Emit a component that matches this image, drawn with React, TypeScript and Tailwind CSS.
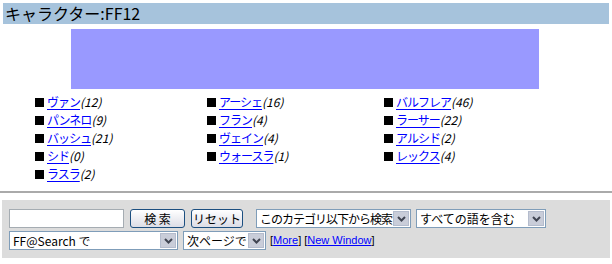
const jp = { fontFamily: '"Noto Sans CJK JP", "DejaVu Sans", sans-serif' };

const chars: [string, number][][] = [
  [["ヴァン", 12], ["アーシェ", 16], ["バルフレア", 46]],
  [["パンネロ", 9], ["フラン", 4], ["ラーサー", 22]],
  [["バッシュ", 21], ["ヴェイン", 4], ["アルシド", 2]],
  [["シド", 0], ["ウォースラ", 1], ["レックス", 4]],
  [["ラスラ", 2]],
];

function Item({ name, n }: { name: string; n: number }) {
  return (
    <div className="flex items-center h-[18px] text-[12px]" style={jp}>
      <span className="inline-block w-[9px] h-[9px] bg-black mr-[3px]" />
      <a className="text-[#0000ff] underline underline-offset-2 tracking-[-1px]">{name}</a>
      <span className="italic text-black">({n})</span>
    </div>
  );
}

function Arrow() {
  return (
    <span className="flex items-center justify-center w-[16px] h-[15px] m-[1px] bg-[#c9cdd9] border border-[#b4bccd]">
      <svg width="9" height="6" viewBox="0 0 9 6">
        <path d="M1 1 L4.5 4.5 L8 1" stroke="#404552" strokeWidth="2" fill="none" />
      </svg>
    </span>
  );
}

function Select({ w, label, tight }: { w: string; label: string; tight?: boolean }) {
  return (
    <div className={`${w} h-[19px] flex items-center justify-between bg-white border border-[#7f9db9]`}>
      <span className={`pl-[3px] text-[12px] leading-none text-black whitespace-nowrap ${tight ? "tracking-[-1px]" : ""}`} style={jp}>
        {label}
      </span>
      <Arrow />
    </div>
  );
}

function Btn({ w, label }: { w: string; label: string }) {
  return (
    <div
      className={`${w} h-[19px] flex items-center justify-center rounded-[3px] border border-[#1c4f80] bg-gradient-to-b from-white to-[#dcdde6] text-[12px] text-black`}
      style={jp}
    >
      {label}
    </div>
  );
}

export default function App() {
  return (
    <div className="w-[612px] h-[264px] bg-white overflow-hidden">
      <div className="mx-[3px] mt-[3px] h-[21px] bg-[#a6c3dc] pl-[2px] text-[16px] leading-[21px] text-black" style={jp}>
        キャラクター:FF12
      </div>
      <div className="mt-[5px] ml-[71px] w-[468px] h-[60px] bg-[#9999ff]" />
      <div className="mt-[4px] pl-[35px]">
        {chars.map((row, i) => (
          <div key={i} className="grid grid-cols-[172px_177px_1fr]">
            {row.map(([name, n]) => (
              <Item key={name} name={name} n={n} />
            ))}
          </div>
        ))}
      </div>
      <div className="mt-[8px] h-[2px] bg-[#aaaaaa]" />
      <div className="mt-[7px] mx-[2px] h-[58px] bg-[#dcdcdc] pt-[9px] pl-[7px] flex flex-col gap-[3px]">
        <div className="flex items-center">
          <div className="w-[115px] h-[19px] bg-white border border-[#a5acb2]" />
          <div className="ml-[6px]"><Btn w="w-[55px]" label="検 索" /></div>
          <div className="ml-[6px]"><Btn w="w-[52px]" label="リセット" /></div>
          <div className="ml-[13px]"><Select w="w-[155px]" label="このカテゴリ以下から検索" tight /></div>
          <div className="ml-[5px]"><Select w="w-[130px]" label="すべての語を含む" /></div>
        </div>
        <div className="flex items-center">
          <Select w="w-[169px]" label="FF@Search で" />
          <div className="ml-[5px]"><Select w="w-[83px]" label="次ページで" /></div>
          <div className="ml-[4px] text-[11px] text-black" style={{ fontFamily: '"Liberation Sans", sans-serif' }}>
            [<a className="text-[#0000ff] underline">More</a>] [<a className="text-[#0000ff] underline">New Window</a>]
          </div>
        </div>
      </div>
    </div>
  );
}
